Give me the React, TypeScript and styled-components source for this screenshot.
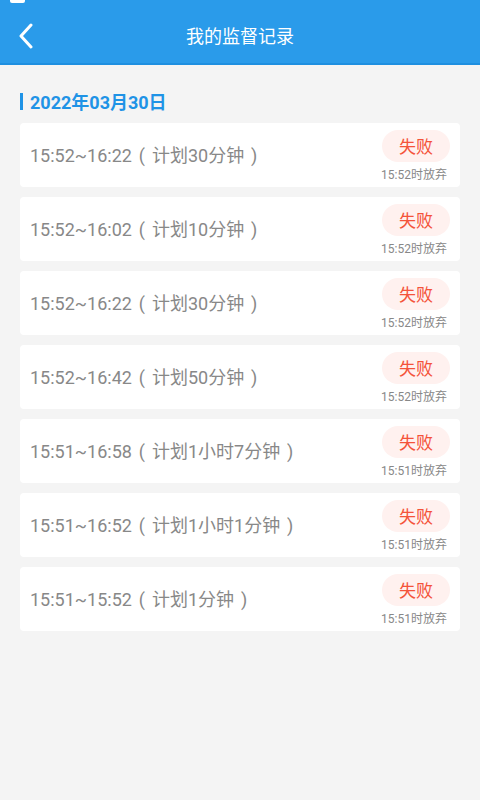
import React from "react";
import styled, { createGlobalStyle } from "styled-components";

const GlobalStyle = createGlobalStyle`
    html, body {
        margin: 0;
        padding: 0;
        background: #f4f4f4;
        font-family: Roboto, "Noto Sans CJK SC", sans-serif;
    }
`;

const Page = styled.div`
    width: 480px;
    min-height: 800px;
    background: #f4f4f4;
`;

const Header = styled.div`
    position: relative;
    height: 63px;
    background: #2a9bea;
    border-bottom: 2px solid #1e8fe0;
    display: flex;
    align-items: center;
    justify-content: center;
`;

const StatusIcon = styled.div`
    position: absolute;
    left: 10px;
    top: 0;
    width: 15px;
    height: 3px;
    background: #fff;
    border-radius: 0 0 2px 2px;
`;

const BackButton = styled.div`
    position: absolute;
    left: 18px;
    top: 22px;
    width: 20px;
    height: 28px;
    display: flex;
    align-items: center;
`;

const Title = styled.div`
    color: #fff;
    font-size: 18px;
    font-family: "Noto Sans CJK SC", sans-serif;
    margin-top: 6px;
`;

const Content = styled.div`
    padding: 24px 20px 0;
`;

const DateTitle = styled.div`
    display: flex;
    align-items: center;
    gap: 7px;
    height: 24px;
    color: #1f93e6;
    font-size: 18px;
    font-weight: bold;
    font-family: Roboto, "Noto Sans CJK SC", sans-serif;
    margin-bottom: 10px;

    &::before {
        content: "";
        width: 3px;
        height: 17px;
        background: #1f93e6;
    }
`;

const List = styled.div`
    display: flex;
    flex-direction: column;
    gap: 10px;
`;

const Card = styled.div`
    height: 64px;
    background: #fff;
    border-radius: 4px;
    display: flex;
    align-items: center;
    justify-content: space-between;
    padding: 0 10px;
    box-sizing: border-box;
`;

const TimeText = styled.div`
    color: #888;
    font-size: 18px;
    font-family: Roboto, "Noto Sans CJK SC", sans-serif;
    margin-top: -2px;
`;

const Paren = styled.span`
    display: inline-block;
    width: 20px;
    text-align: center;
`;

const Status = styled.div`
    display: flex;
    flex-direction: column;
    align-items: flex-end;
    padding-top: 1px;
`;

const Badge = styled.div`
    width: 68px;
    height: 32px;
    border-radius: 16px;
    background: #fff1ef;
    color: #f4533a;
    font-size: 17px;
    font-family: "Noto Sans CJK SC", sans-serif;
    display: flex;
    align-items: center;
    justify-content: center;
`;

const GiveUp = styled.div`
    color: #888;
    font-size: 12px;
    font-family: Roboto, "Noto Sans CJK SC", sans-serif;
    margin-top: 3px;
    margin-right: 3px;
`;

const records = [
    { range: "15:52~16:22", plan: "30分钟", quit: "15:52" },
    { range: "15:52~16:02", plan: "10分钟", quit: "15:52" },
    { range: "15:52~16:22", plan: "30分钟", quit: "15:52" },
    { range: "15:52~16:42", plan: "50分钟", quit: "15:52" },
    { range: "15:51~16:58", plan: "1小时7分钟", quit: "15:51" },
    { range: "15:51~16:52", plan: "1小时1分钟", quit: "15:51" },
    { range: "15:51~15:52", plan: "1分钟", quit: "15:51" },
];

export default function App() {
    return (
        <>
            <GlobalStyle />
            <Page>
                <Header>
                    <StatusIcon />
                    <BackButton>
                        <svg width="16" height="26" viewBox="0 0 16 26">
                            <polyline
                                points="13,2 3,13 13,24"
                                fill="none"
                                stroke="#fff"
                                strokeWidth="3"
                                strokeLinecap="round"
                                strokeLinejoin="round"
                            />
                        </svg>
                    </BackButton>
                    <Title>我的监督记录</Title>
                </Header>
                <Content>
                    <DateTitle>2022年03月30日</DateTitle>
                    <List>
                        {records.map((r, i) => (
                            <Card key={i}>
                                <TimeText>
                                    {r.range}
                                    <Paren>(</Paren>计划{r.plan}
                                    <Paren>)</Paren>
                                </TimeText>
                                <Status>
                                    <Badge>失败</Badge>
                                    <GiveUp>{r.quit}时放弃</GiveUp>
                                </Status>
                            </Card>
                        ))}
                    </List>
                </Content>
            </Page>
        </>
    );
}
